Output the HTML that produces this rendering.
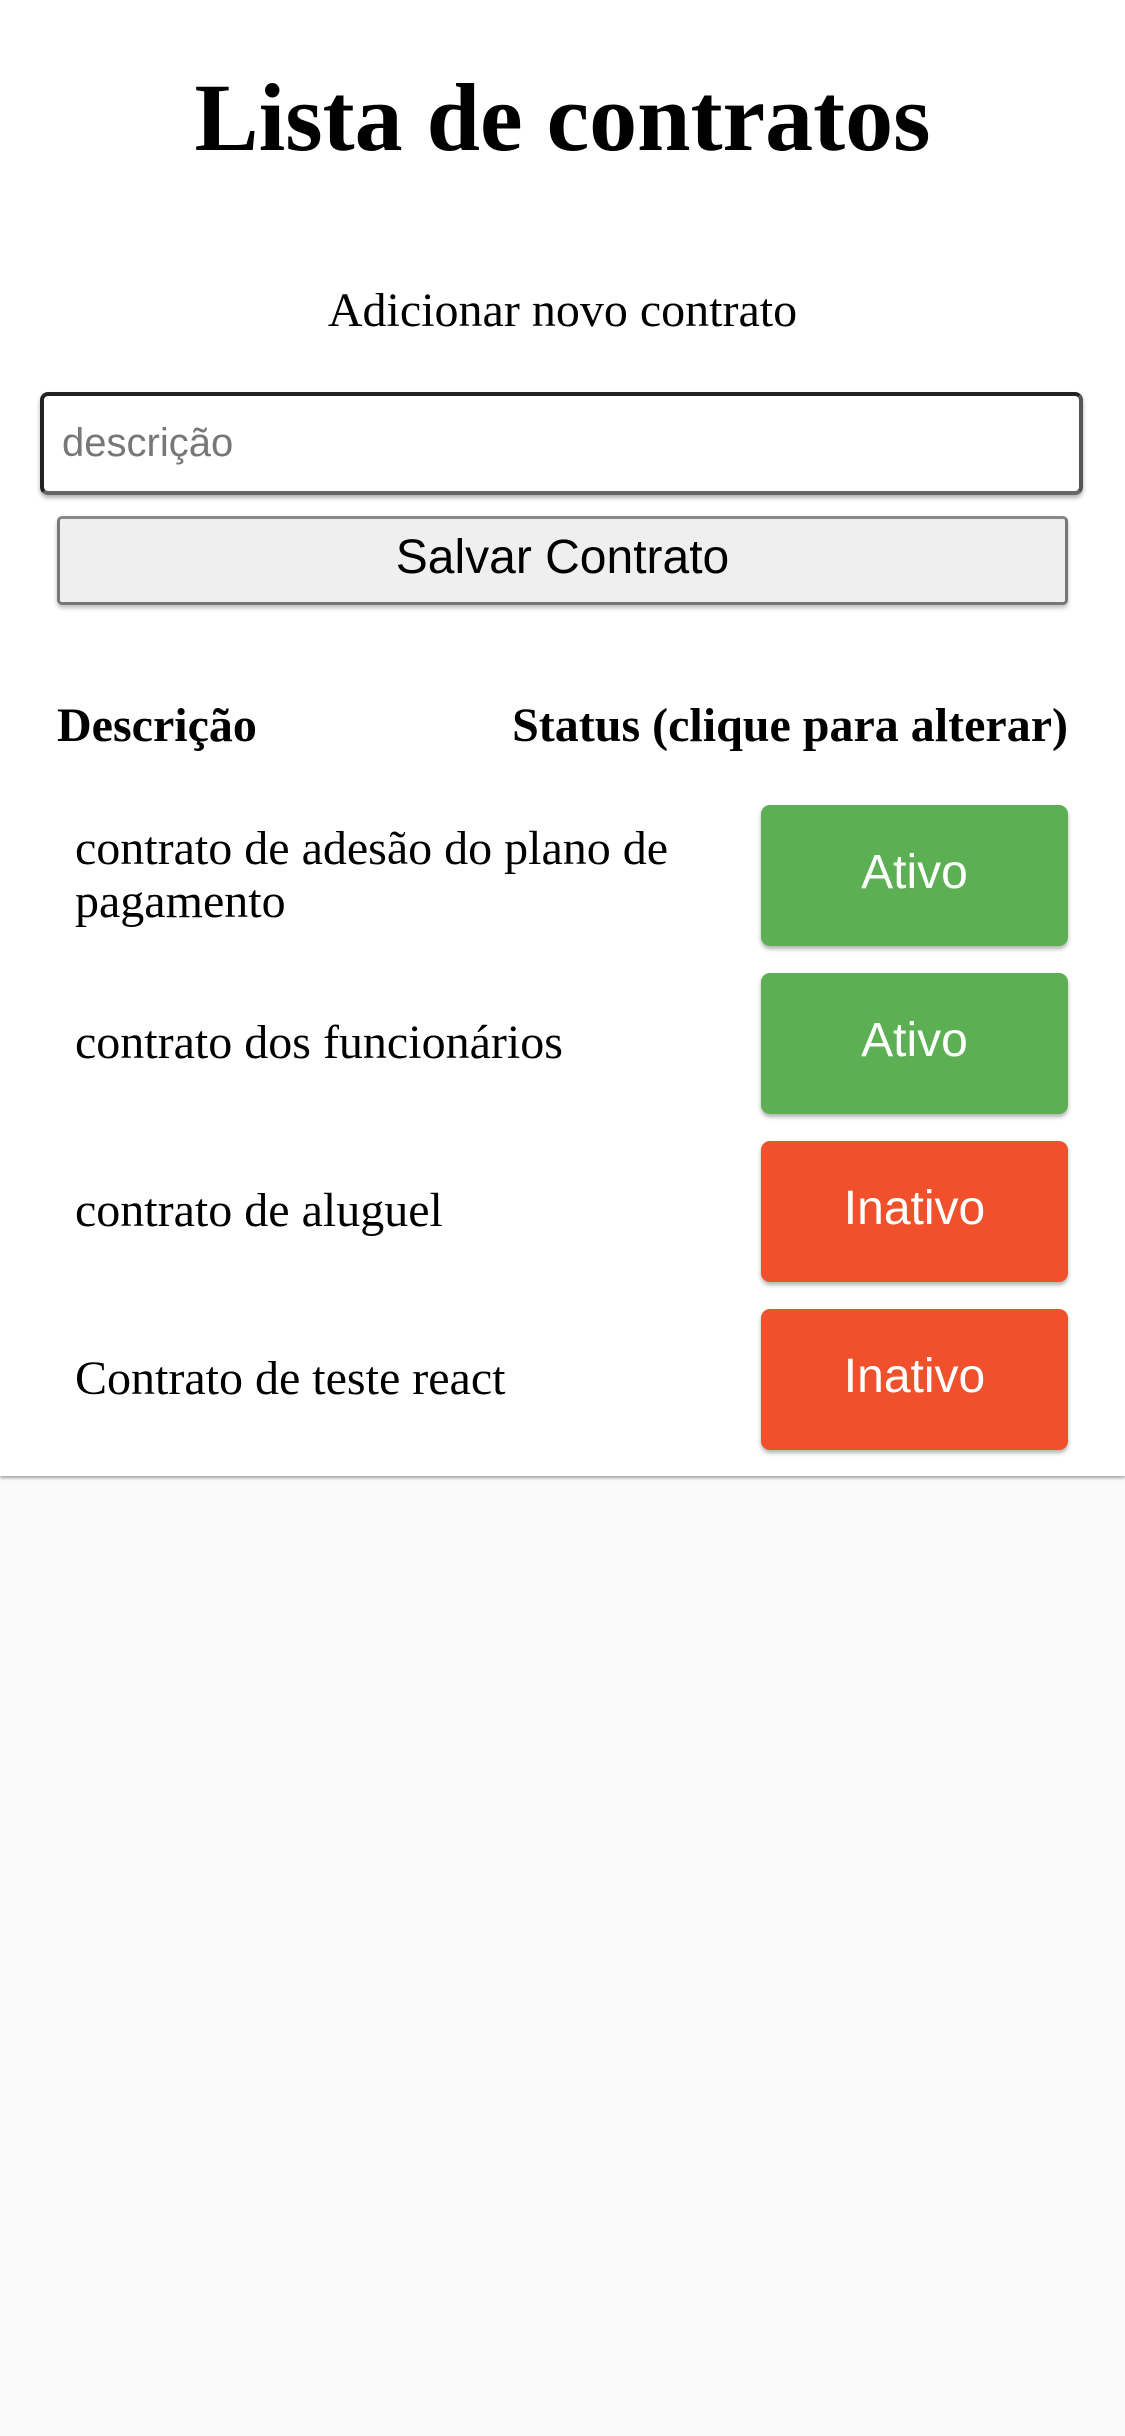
<!DOCTYPE html>
<html><head><meta charset="utf-8"><style>
html,body{margin:0;padding:0;}
body{width:1125px;height:2436px;background:#fafafa;position:relative;overflow:hidden;font-family:"Liberation Serif",serif;}
.card{position:absolute;left:0;top:0;width:1125px;height:1476px;background:#fff;box-shadow:0 2px 3px rgba(0,0,0,0.35);}
.abs{position:absolute;}
h1{position:absolute;left:0;width:1125px;top:58px;margin:0;text-align:center;font-size:96px;line-height:120px;font-weight:bold;}
.sub{left:0;width:1125px;top:283px;text-align:center;font-size:48px;line-height:56px;}
.input{left:40px;top:392px;width:1043px;height:103px;border:4px solid #222;border-bottom-color:#666;border-right-color:#555;border-radius:8px;box-shadow:0 3px 4px rgba(0,0,0,0.3);box-sizing:border-box;background:#fff;}
.ph{left:62px;top:420px;font-family:"Liberation Sans",sans-serif;font-size:40px;line-height:46px;color:#777;}
.btn{left:57px;top:516px;width:1011px;height:89px;background:#efefef;border:3px solid #777;border-top-color:#888;border-radius:5px;box-sizing:border-box;box-shadow:0 3px 4px rgba(0,0,0,0.25);text-align:center;font-family:"Liberation Sans",sans-serif;font-size:48px;line-height:78px;color:#000;}
.th{font-weight:bold;font-size:48px;line-height:56px;top:698px;}
.row{left:75px;font-size:48px;line-height:53px;}
.st{left:761px;width:307px;height:141px;border-radius:9px;color:#fff;font-family:"Liberation Sans",sans-serif;font-size:48px;line-height:136px;text-align:center;box-shadow:0 3px 4px rgba(0,0,0,0.3);}
.g{background:#5cb053;}.r{background:#f0512c;}
</style></head><body>
<div class="card"></div>
<h1>Lista de contratos</h1>
<div class="abs sub">Adicionar novo contrato</div>
<div class="abs input"></div>
<div class="abs ph">descrição</div>
<div class="abs btn">Salvar Contrato</div>
<div class="abs th" style="left:57px">Descrição</div>
<div class="abs th" style="right:57px">Status (clique para alterar)</div>
<div class="abs row" style="top:822px">contrato de adesão do plano de<br>pagamento</div>
<div class="abs st g" style="top:805px">Ativo</div>
<div class="abs row" style="top:1016px">contrato dos funcionários</div>
<div class="abs st g" style="top:973px">Ativo</div>
<div class="abs row" style="top:1184px">contrato de aluguel</div>
<div class="abs st r" style="top:1141px">Inativo</div>
<div class="abs row" style="top:1352px">Contrato de teste react</div>
<div class="abs st r" style="top:1309px">Inativo</div>
</body></html>
